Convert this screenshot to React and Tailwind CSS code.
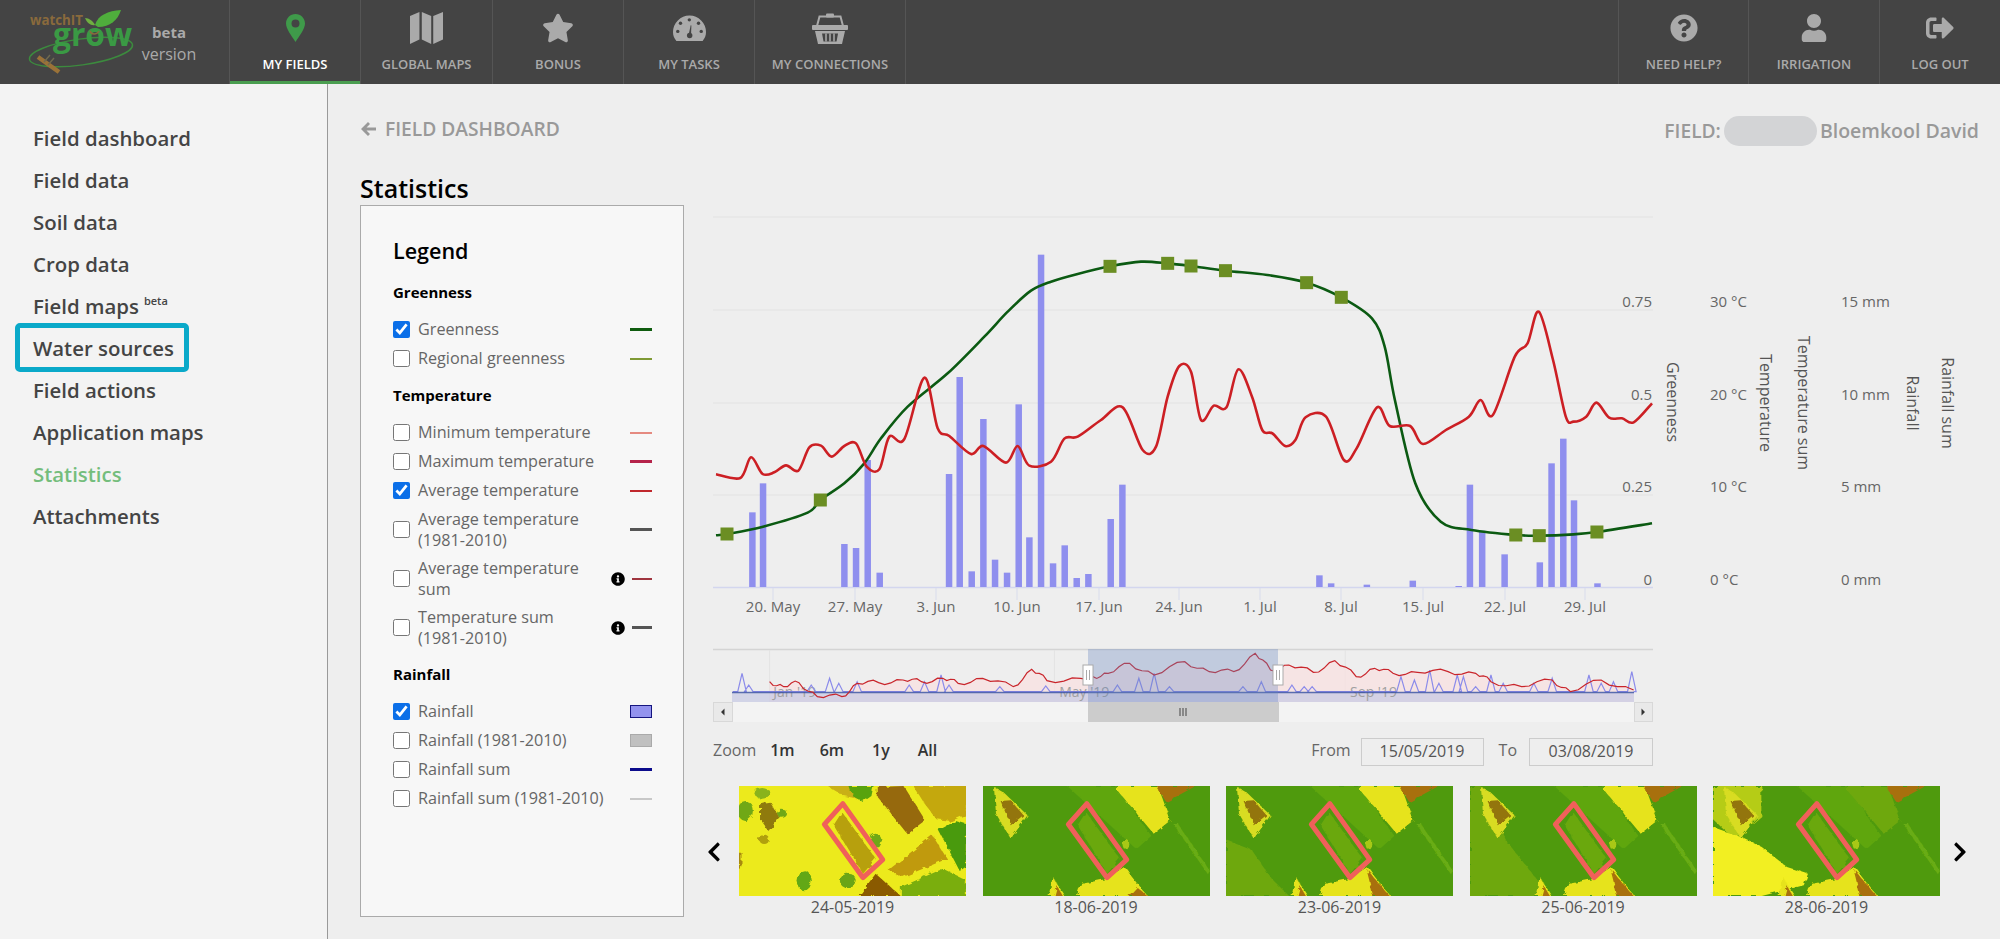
import React from "react";
import {
  FaStar,
  FaQuestionCircle,
  FaUser,
  FaSignOutAlt,
  FaInfoCircle,
  FaChevronLeft,
  FaChevronRight,
} from "react-icons/fa";

const sideItems = [
  "Field dashboard",
  "Field data",
  "Soil data",
  "Crop data",
  "Field maps",
  "Water sources",
  "Field actions",
  "Application maps",
  "Statistics",
  "Attachments",
];

const legend = [
  {
    title: "Greenness",
    rows: [
      { label: "Greenness", checked: true, swatch: "h-[3px] bg-[#0f5c0f]" },
      { label: "Regional greenness", swatch: "h-[2px] bg-[#7f9a35]" },
    ],
  },
  {
    title: "Temperature",
    rows: [
      { label: "Minimum temperature", swatch: "h-[2px] bg-[#e58a80]" },
      { label: "Maximum temperature", swatch: "h-[3px] bg-[#b5234a]" },
      { label: "Average temperature", checked: true, swatch: "h-[2px] bg-[#c0272d]" },
      { label: "Average temperature\n(1981-2010)", swatch: "h-[3px] bg-[#555555]" },
      { label: "Average temperature\nsum", info: true, swatch: "h-[2px] bg-[#a0353f]" },
      { label: "Temperature sum\n(1981-2010)", info: true, swatch: "h-[3px] bg-[#555555]" },
    ],
  },
  {
    title: "Rainfall",
    rows: [
      { label: "Rainfall", checked: true, swatch: "h-[13px] bg-[#9393ee] border border-[#15157f]" },
      { label: "Rainfall (1981-2010)", swatch: "h-[13px] bg-[#c0c0c0] border border-[#aaaaaa]" },
      { label: "Rainfall sum", swatch: "h-[3px] bg-[#0c0c8c]" },
      { label: "Rainfall sum (1981-2010)", swatch: "h-[2px] bg-[#c8c8c8]" },
    ],
  },
];

// chart coordinates were read off the zoomed crops
const z5 = ([x, y]) => [700 + x / 3, 200 + y / 3];
const z6 = ([x, y]) => [1200 + x / 1.96, 200 + y / 3];
const z7 = ([x, y]) => [700 + x / 1.633, 640 + y / 3];

const greenPts = [
  ...[[45,1006],[78,1002],[186,980],[320,938],[358,900],[430,850],[490,790],[540,715],[620,620],[740,520],[850,410],[920,335],[990,272],[1050,245],[1130,222],[1227,199],[1320,185],[1400,190],[1470,198]].map(z5),
  ...[[48,212],[130,225],[207,248],[275,292],[335,355],[360,440],[380,600],[420,850],[470,965],[530,990],[617,1005],[663,1007],[730,1003],[776,996],[884,970]].map(z6),
];

const markers = [
  ...[[78,1002],[358,900],[1227,199],[1400,190],[1470,198]].map(z5),
  ...[[48,212],[207,248],[275,292],[617,1005],[663,1007],[776,996]].map(z6),
];

const redPts = [
  ...[[45,823],[118,834],[150,772],[185,822],[220,817],[255,796],[292,812],[325,742],[360,737],[392,770],[430,738],[465,730],[497,800],[535,808],[565,710],[610,717],[670,533],[710,685],[745,708],[810,762],[847,738],[915,788],[950,738],[985,797],[1050,785],[1090,716],[1130,710],[1200,660],[1265,622],[1325,750],[1365,740],[1400,590],[1435,498],[1470,515],[1500,660]].map(z5),
  ...[[25,617],[50,622],[73,508],[100,590],[120,690],[140,700],[165,738],[185,720],[205,652],[245,650],[280,780],[305,745],[345,622],[370,678],[410,678],[435,732],[480,690],[525,650],[548,600],[572,645],[615,470],[640,430],[662,335],[690,480],[715,650],[730,665],[755,650],[775,608],[800,653],[825,655],[848,667],[884,610]].map(z6),
];

const bars = [
  ...[[154,937],[186,850],[430,1032],[465,1044],[500,780],[536,1118],[744,822],[776,531],[812,1114],[847,657],[882,1079],[918,1118],[953,613],[985,1012],[1020,164],[1056,1090],[1091,1036],[1127,1134],[1162,1122],[1229,957],[1264,854]].map(z5),
  ...[[232,1126],[255,1150],[325,1154],[415,1142],[505,1158],[527,854],[551,992],[595,1063],[664,1087],[687,790],[710,716],[731,901],[777,1150]].map(z6),
];

const ticks = [
  [772, "20. May"], [854, "27. May"], [935, "3. Jun"], [1016, "10. Jun"], [1098, "17. Jun"],
  [1178, "24. Jun"], [1259, "1. Jul"], [1340, "8. Jul"], [1422, "15. Jul"], [1504, "22. Jul"], [1584, "29. Jul"],
];

const gridYs = [217, 310, 403, 495];

const yLabels = [
  [302, "0.75", "30 °C", "15 mm"],
  [395, "0.5", "20 °C", "10 mm"],
  [487, "0.25", "10 °C", "5 mm"],
  [580, "0", "0 °C", "0 mm"],
];

const axisTitles = [
  [1672, 402, "Greenness"],
  [1765, 403, "Temperature"],
  [1803, 403, "Temperature sum"],
  [1912, 403, "Rainfall"],
  [1947, 403, "Rainfall sum"],
];

const navRed = [[112,125],[135,140],[160,128],[190,170],[230,170],[255,130],[290,128],[330,120],[360,125],[395,115],[420,130],[460,115],[510,140],[540,88],[565,122],[620,115],[640,110],[665,100],[700,70],[740,105],[790,65],[830,95],[870,95],[905,40],[930,90],[960,75],[1000,97],[1035,62],[1070,110],[1100,85],[1130,100],[1170,97],[1220,95],[1265,100],[1290,125],[1340,140],[1390,120],[1420,155],[1470,120],[1523,150]];
const navSpikes = [[67,100],[78,135],[180,135],[210,115],[225,130],[255,125],[340,135],[365,125],[392,105],[405,135],[488,140],[563,138],[680,135],[715,115],[740,100],[765,140],[885,140],[915,125],[965,135],[985,140],[998,140],[1143,110],[1165,120],[1190,90],[1205,130],[1235,105],[1245,110],[1265,140],[1290,105],[1310,130],[1360,130],[1390,115],[1450,105],[1470,130],[1490,125],[1520,95]];

// catmull-rom through the points, flattened to cubic beziers
function smooth(pts, t = 0.16) {
  let d = `M${pts[0][0]} ${pts[0][1]}`;
  for (let i = 0; i < pts.length - 1; i++) {
    const p0 = pts[i - 1] || pts[i];
    const p1 = pts[i];
    const p2 = pts[i + 1];
    const p3 = pts[i + 2] || p2;
    d += `C${p1[0] + (p2[0] - p0[0]) * t} ${p1[1] + (p2[1] - p0[1]) * t} ${p2[0] - (p3[0] - p1[0]) * t} ${p2[1] - (p3[1] - p1[1]) * t} ${p2[0]} ${p2[1]}`;
  }
  return d;
}

// adds the small day-to-day jitter of the navigator series
function wiggle(pts, amp) {
  const out = [];
  pts.forEach((p, i) => {
    out.push(p);
    const n = pts[i + 1];
    if (n) out.push([(p[0] + n[0]) / 2, (p[1] + n[1]) / 2 + (i % 2 ? -amp : amp)]);
  });
  return out;
}

function spikeLine() {
  let d = `M${z7([52, 155]).join(" ")}`;
  navSpikes.forEach(([x, y]) => {
    const a = z7([x - 7, 155]);
    const b = z7([x, y]);
    const c = z7([x + 7, 155]);
    d += `L${a.join(" ")}L${b.join(" ")}L${c.join(" ")}`;
  });
  return d + `L${z7([1523, 155]).join(" ")}`;
}

function StatsChart() {
  const navRedPts = wiggle(wiggle(navRed.map(z7), 1.6), 1.8);
  const navRedLine = "M" + navRedPts.map((p) => p.join(" ")).join("L");
  const areaD = navRedLine + `L${navRedPts[navRedPts.length - 1][0]} 702L${navRedPts[0][0]} 702Z`;
  return (
    <svg width="1300" height="520" viewBox="700 205 1300 520" className="block" fontFamily="Open Sans, sans-serif">
      {gridYs.map((y) => (
        <line key={y} x1="712" x2="1652" y1={y} y2={y} stroke="#e6e6e6" strokeWidth="1.5" />
      ))}
      <line x1="712" x2="1652" y1="587.5" y2="587.5" stroke="#d3d6ee" strokeWidth="1.5" />
      {ticks.map(([x, label]) => (
        <g key={label}>
          <line x1={x} x2={x} y1="588" y2="600" stroke="#d8dcec" />
          <text x={x} y="612" textAnchor="middle" fontSize="15" fill="#666666">
            {label}
          </text>
        </g>
      ))}
      {bars.map(([x, y], i) => (
        <rect key={i} x={x - 3.2} y={y} width="6.5" height={587 - y} fill="#8f8fee" />
      ))}
      <path d={smooth(greenPts)} fill="none" stroke="#0b5a12" strokeWidth="2.6" />
      <path d={smooth(redPts)} fill="none" stroke="#cc1f24" strokeWidth="2.6" />
      {markers.map(([x, y], i) => (
        <rect key={i} x={x - 6.5} y={y - 6.5} width="13" height="13" fill="#6b8e23" />
      ))}
      {yLabels.map(([y, a, b, c]) => (
        <g key={a} fontSize="15" fill="#666666">
          <text x="1651" y={y + 5} textAnchor="end">{a}</text>
          <text x="1709" y={y + 5}>{b}</text>
          <text x="1840" y={y + 5}>{c}</text>
        </g>
      ))}
      {axisTitles.map(([x, y, label]) => (
        <text
          key={label}
          x={x}
          y={y}
          textAnchor="middle"
          dominantBaseline="central"
          fontSize="16"
          fill="#555555"
          transform={`rotate(90 ${x} ${y})`}
        >
          {label}
        </text>
      ))}

      {/* navigator */}
      <line x1="712" x2="1652" y1="649.5" y2="649.5" stroke="#d4d4d4" strokeWidth="1.5" />
      {[112, 577, 1052].map((x) => (
        <line key={x} x1={z7([x, 0])[0]} x2={z7([x, 0])[0]} y1="650" y2="702" stroke="#e3e3e3" />
      ))}
      <path d={areaD} fill="#f9dfdf" fillOpacity="0.7" />
      <rect x="731" y="692" width="902" height="10" fill="#c8cbe4" fillOpacity="0.75" />
      {[[118, "Jan '19"], [585, "May '19"], [1060, "Sep '19"]].map(([x, label]) => (
        <text key={label} x={z7([x, 0])[0]} y="697" fontSize="14" fill="#a0a0a0">
          {label}
        </text>
      ))}
      <path d={spikeLine()} fill="none" stroke="#8b8bea" strokeWidth="1.2" />
      <line x1="731" x2="1633" y1="692.5" y2="692.5" stroke="#2f4a9c" strokeWidth="1.3" strokeOpacity="0.75" />
      <path d={navRedLine} fill="none" stroke="#c9252b" strokeWidth="1.2" />
      <rect x="1087" y="649" width="190" height="53" fill="#6685c0" fillOpacity="0.33" />
      {[1087, 1277].map((x) => (
        <g key={x}>
          <rect x={x - 5} y="665" width="10" height="20" fill="#ffffff" stroke="#aaaaaa" />
          <line x1={x - 1.5} x2={x - 1.5} y1="670" y2="680" stroke="#aaaaaa" />
          <line x1={x + 1.5} x2={x + 1.5} y1="670" y2="680" stroke="#aaaaaa" />
        </g>
      ))}

      {/* scrollbar */}
      <rect x="712" y="702" width="940" height="20" fill="#f3f3f3" />
      <rect x="1087" y="702" width="191" height="20" fill="#cccccc" />
      <path d="M1179 708v8M1182 708v8M1185 708v8" stroke="#444444" />
      <rect x="712.5" y="702.5" width="19" height="19" fill="#e9e9e9" stroke="#d8d8d8" />
      <rect x="1633.5" y="702.5" width="18" height="19" fill="#e9e9e9" stroke="#d8d8d8" />
      <path d="M723.5 708.5v7l-3.5-3.5zM1640.5 708.5v7l3.5-3.5z" fill="#333333" />
    </svg>
  );
}

// thumbnail layers, in a 540x330 box measured from the crops
const dryLayers = [
  { fill: "#70a815", cx: 15, cy: 75, rx: 18, ry: 30 },
  { fill: "#8ab31a", cx: 55, cy: 22, rx: 18, ry: 16 },
  { fill: "#70a815", cx: 100, cy: 80, rx: 12, ry: 12 },
  { fill: "#8f7a10", points: "50,55 75,50 95,95 70,135 50,100" },
  { fill: "#b0a010", cx: 60, cy: 160, rx: 12, ry: 14 },
  { fill: "#c9b015", points: "210,0 285,0 290,40 250,30" },
  { fill: "#58a30e", points: "262,0 320,0 315,30 295,48 270,30" },
  { fill: "#96690a", points: "330,3 392,0 443,103 400,143 330,33" },
  { fill: "#c4a80c", points: "415,0 542,0 542,85 505,105 470,100 440,50" },
  { fill: "#4a9a08", points: "475,133 515,105 542,115 542,240 525,255" },
  { fill: "#c09a08", points: "355,253 460,148 495,218 390,273" },
  { fill: "#7aae10", points: "385,303 485,248 542,283 542,330 385,330" },
  { fill: "#8a5a00", points: "325,263 385,330 285,330" },
  { fill: "#a88a08", points: "0,200 6,200 6,240 0,250" },
  { fill: "#62a812", cx: 155, cy: 283, rx: 18, ry: 30 },
  { fill: "#6aa514", cx: 260, cy: 285, rx: 20, ry: 22 },
  { fill: "#70a815", cx: 325, cy: 165, rx: 14, ry: 22 },
  { fill: "#b7a00a", points: "225,118 245,78 325,218 295,263" },
];

function greenLayers({ extra = [], field = "#e6e31c", stripe = "334,248 389,330 350,330" } = {}) {
  return [
    { fill: "#5ea60e", points: "200,0 318,0 400,150 365,190" },
    ...extra,
    { fill: field, points: "321,0 416,0 446,103 406,143 321,15" },
    { fill: "#a87008", points: "411,0 506,0 436,48" },
    { fill: "#d8dc20", points: "26,3 50,20 106,88 66,158 31,83" },
    { fill: "#93740c", points: "42,45 66,43 96,88 66,118" },
    { fill: "#e6e31c", points: "336,243 391,330 226,330 236,293 290,280" },
    { fill: "#a87008", points: stripe },
    { fill: "#e6e31c", points: "166,273 196,330 156,330" },
    { fill: "#a87008", points: "176,300 190,330 170,330" },
    { fill: "#68ac12", points: "450,110 460,106 540,255 535,265" },
    { fill: "#a8c818", cx: 340, cy: 175, rx: 8, ry: 16 },
    { fill: "#6aa810", points: "225,118 245,78 325,218 295,263" },
  ];
}

const thumbs = [
  { date: "24-05-2019", base: "#ecea1e", layers: dryLayers },
  { date: "18-06-2019", base: "#4f9a08", layers: greenLayers({ stripe: "366,303 391,330 346,330" }) },
  {
    date: "23-06-2019",
    base: "#4f9a08",
    layers: greenLayers({ extra: [{ fill: "#6ea810", points: "0,160 60,190 110,280 150,330 0,330" }] }),
  },
  {
    date: "25-06-2019",
    base: "#4f9a08",
    layers: greenLayers({ extra: [{ fill: "#6ea810", points: "0,0 25,0 90,170 190,330 0,330" }] }),
  },
  {
    date: "28-06-2019",
    base: "#4f9a08",
    layers: greenLayers({
      field: "#6ea810",
      extra: [
        { fill: "#b5cc18", points: "0,0 115,0 115,90 50,160 0,100" },
        { fill: "#f2ef20", points: "0,123 66,153 116,183 176,243 226,263 216,298 116,330 0,330" },
      ],
    }),
  },
];

function Thumb({ thumb }) {
  return (
    <div className="w-[227px]">
      <svg width="227" height="110" viewBox="0 0 540 330" preserveAspectRatio="none" className="block">
        <filter id="soft" x="-5%" y="-5%" width="110%" height="110%">
          <feTurbulence type="fractalNoise" baseFrequency="0.06" numOctaves="2" seed="4" result="noise" />
          <feDisplacementMap in="SourceGraphic" in2="noise" scale="16" result="rough" />
          <feGaussianBlur in="rough" stdDeviation="1.6" />
        </filter>
        <g filter="url(#soft)">
          <rect x="-30" y="-30" width="600" height="390" fill={thumb.base} />
          {thumb.layers.map((l, i) =>
            l.points ? (
              <polygon key={i} fill={l.fill} points={l.points} />
            ) : (
              <ellipse key={i} fill={l.fill} cx={l.cx} cy={l.cy} rx={l.rx} ry={l.ry} />
            ),
          )}
        </g>
        <polygon
          points="247,53 342,221 295,275 203,115"
          fill="none"
          stroke="#f0605a"
          strokeWidth="5"
          strokeLinejoin="round"
          vectorEffect="non-scaling-stroke"
        />
      </svg>
      <div className="h-[22px] text-center text-[16px] leading-[22px] text-[#555]">{thumb.date}</div>
    </div>
  );
}

function PinIcon() {
  return (
    <svg width="19" height="28" viewBox="0 0 19 28" fill="#3f9a4a">
      <path
        fillRule="evenodd"
        d="M9.5 0C4.2 0 0 4.2 0 9.5 0 15 5.5 21.5 9.5 28 13.5 21.5 19 15 19 9.5 19 4.2 14.8 0 9.5 0ZM9.5 5.5a4 4 0 1 1 0 8 4 4 0 0 1 0-8Z"
      />
    </svg>
  );
}

function MapIcon() {
  return (
    <svg width="33" height="32" viewBox="0 0 98 95" fill="#aaaaaa">
      <path d="M0 12 28 0V82L0 95Z" />
      <path d="M35 0 63 12V95L35 82Z" />
      <path d="M69 12 98 0V82L69 95Z" />
    </svg>
  );
}

function GaugeIcon() {
  return (
    <svg width="33" height="26" viewBox="0 0 97 76">
      <path d="M10 76C3 68 0 60 0 50A48.5 48.5 0 0 1 97 50C97 60 94 68 87 76Z" fill="#aaaaaa" />
      <g fill="#444444">
        <circle cx="48" cy="14" r="5" />
        <circle cx="22" cy="24" r="5" />
        <circle cx="75" cy="24" r="5" />
        <circle cx="14" cy="48" r="5" />
        <circle cx="83" cy="48" r="5" />
        <circle cx="49" cy="60" r="8" />
      </g>
      <path d="M46 58 52 30 54 31 53 60Z" fill="#444444" />
    </svg>
  );
}

function BasketIcon() {
  return (
    <svg width="36" height="31" viewBox="0 0 36 31">
      <path d="M5 13 7.5 3.5H28.5L31 13" fill="none" stroke="#aaaaaa" strokeWidth="2" />
      <rect x="14" y="0.5" width="8" height="4" rx="1" fill="#aaaaaa" />
      <rect x="0" y="12" width="36" height="5" rx="1" fill="#aaaaaa" />
      <path d="M3 18H33L30 31H6Z" fill="#aaaaaa" />
      <path d="M10 20.5H26L24.5 28.5H11.5Z" fill="#444444" />
      <path d="M14 20.5V28.5M18 20.5V28.5M22 20.5V28.5" stroke="#aaaaaa" strokeWidth="1.5" />
    </svg>
  );
}

function BackArrow() {
  return (
    <svg width="16" height="16" viewBox="0 0 16 16" fill="#999999">
      <path d="M8 1 1 8 8 15 10 13 6.5 9.5H16V6.5H6.5L10 3Z" />
    </svg>
  );
}

function Logo() {
  return (
    <svg width="120" height="84" viewBox="20 0 120 84" className="block" fontFamily="Open Sans, sans-serif">
      <ellipse cx="81" cy="52" rx="52" ry="13" fill="none" stroke="#3c8a3e" strokeWidth="1.5" transform="rotate(-8 81 52)" />
      <text x="30" y="25" fontSize="15" fontWeight="700" fill="#8a6a3c" textLength="53" lengthAdjust="spacingAndGlyphs">
        watchIT
      </text>
      <text x="53" y="46" fontSize="32" fontWeight="700" fill="#3a9a44" textLength="79" lengthAdjust="spacingAndGlyphs">
        grow
      </text>
      <path d="M95 25C98 15 108 11 121 10 118 20 110 27 98 27Z" fill="#4fae3c" />
      <path d="M85 18C89 18 93 21 95 25 91 26 87 23 85 18Z" fill="#6fb040" />
      <path d="M90 31C91 35 97 35 99 31" fill="none" stroke="#8a6a3c" strokeWidth="1.5" />
      <path d="M38 57 59 72" stroke="#9a7238" strokeWidth="4.5" />
      <path d="M50 55 44 62M54 58 48 65" stroke="#6f6a50" strokeWidth="1.5" />
    </svg>
  );
}

function NavItem({ icon, label, active, right }) {
  return (
    <div
      className={`relative flex h-full flex-col items-center ${right ? "border-l border-[#555]" : "border-r border-[#555]"}`}
    >
      <div className="flex h-[56px] items-center justify-center text-[#aaaaaa]">{icon}</div>
      <div className={`text-[13px] leading-[16px] font-semibold uppercase ${active ? "text-white" : "text-[#aaaaaa]"}`}>
        {label}
      </div>
      {active && <div className="absolute right-0 bottom-0 left-0 h-[3px] bg-[#4a9e50]" />}
    </div>
  );
}

function LegendRow({ row }) {
  const isDouble = row.label.includes("\n");
  return (
    <div className={`flex items-center ${isDouble ? "h-[49px]" : "h-[29px]"}`}>
      <input type="checkbox" defaultChecked={row.checked} className="m-0 h-[17px] w-[17px] shrink-0 accent-[#0b6fe8]" />
      <span className="ml-[8px] flex-1 text-[16.2px] leading-[21px] whitespace-pre-line text-[#666]">{row.label}</span>
      {row.info && <FaInfoCircle className="mr-[7px] text-[14px] text-black" />}
      <span className={`${row.info ? "w-[20px]" : "w-[22px]"} ${row.swatch}`} />
    </div>
  );
}

export default function App() {
  return (
    <div className="flex h-screen w-full flex-col overflow-hidden bg-[#eeeeee] [font-family:'Open_Sans',sans-serif]">
      <header className="flex h-[84px] shrink-0 bg-[#444444]">
        <div className="flex w-[230px] border-r border-[#555] pl-[20px]">
          <Logo />
          <div className="flex w-[58px] flex-col items-center pt-[21px] text-[#aaaaaa]">
            <span className="text-[15px] leading-[22px] font-bold">beta</span>
            <span className="text-[16px] leading-[22px]">version</span>
          </div>
        </div>
        <div className="w-[131px]">
          <NavItem icon={<PinIcon />} label="My fields" active />
        </div>
        <div className="w-[132px]">
          <NavItem icon={<MapIcon />} label="Global maps" />
        </div>
        <div className="w-[131px]">
          <NavItem icon={<FaStar className="text-[32px]" />} label="Bonus" />
        </div>
        <div className="w-[131px]">
          <NavItem icon={<GaugeIcon />} label="My tasks" />
        </div>
        <div className="w-[151px]">
          <NavItem icon={<BasketIcon />} label="My connections" />
        </div>
        <div className="flex-1" />
        <div className="w-[130px]">
          <NavItem icon={<FaQuestionCircle className="text-[28px]" />} label="Need help?" right />
        </div>
        <div className="w-[131px]">
          <NavItem icon={<FaUser className="text-[28px]" />} label="Irrigation" right />
        </div>
        <div className="w-[121px]">
          <NavItem icon={<FaSignOutAlt className="text-[28px]" />} label="Log out" right />
        </div>
      </header>

      <div className="flex flex-1">
        <aside className="w-[328px] shrink-0 border-r border-[#999999] bg-[#f3f3f3] pt-[33px] pl-[33px]">
          {sideItems.map((item) => (
            <div
              key={item}
              className={`relative flex h-[42px] items-center text-[20.4px] font-semibold ${item === "Statistics" ? "text-[#74bd7c]" : "text-[#444444]"}`}
            >
              {item}
              {item === "Field maps" && <sup className="ml-[5px] text-[11px] font-semibold">beta</sup>}
              {item === "Water sources" && (
                <span className="absolute top-[-4px] left-[-18px] h-[49px] w-[174px] rounded-[5px] border-[5px] border-[#0aa9c9]" />
              )}
            </div>
          ))}
        </aside>

        <main className="flex-1 pl-[32px]">
          <div className="flex h-[90px] items-start justify-between pt-[32px] pr-[22px] text-[19.2px] leading-[26px] font-semibold text-[#999999]">
            <div className="flex items-center">
              <span className="mr-[9px]">
                <BackArrow />
              </span>
              FIELD DASHBOARD
            </div>
            <div className="flex items-center">
              FIELD:
              <span className="mr-[3px] ml-[3px] h-[30px] w-[93px] rounded-full bg-[#d3d4d6]" />
              <span className="text-[19.5px]">Bloemkool David</span>
            </div>
          </div>
          <h2 className="mt-[-2px] h-[33px] text-[25px] leading-[32px] font-semibold text-black">Statistics</h2>

          <div className="flex">
            <div className="h-[712px] w-[324px] shrink-0 border border-[#aaaaaa] bg-[#f7f7f7] pt-[30px] pr-[31px] pl-[32px]">
              <div className="mb-[15px] text-[21.5px] leading-[30px] font-semibold text-black">Legend</div>
              {legend.map((section, i) => (
                <div key={section.title} className={i > 0 ? "mt-[11px]" : ""}>
                  <div className="mb-[12px] h-[22px] text-[15px] leading-[22px] font-bold text-black">{section.title}</div>
                  {section.rows.map((row) => (
                    <LegendRow key={row.label} row={row} />
                  ))}
                </div>
              ))}
            </div>

            <div className="ml-[17px] flex-1">
              <StatsChart />
              <div className="mt-[13px] ml-[12px] flex h-[28px] w-[940px] items-center text-[16px] text-[#666]">
                <span className="pb-[5px]">Zoom</span>
                <div className="ml-[14px] flex gap-[28px] pb-[5px] font-semibold text-[#333]">
                  <span className="mr-[-3px]">1m</span>
                  <span>6m</span>
                  <span>1y</span>
                  <span>All</span>
                </div>
                <div className="ml-auto flex items-center">
                  <span className="pb-[5px]">From</span>
                  <span className="ml-[10px] flex h-[28px] w-[123px] items-center justify-center border border-[#cccccc] pb-[3px] text-[#555]">
                    15/05/2019
                  </span>
                  <span className="mr-[12px] ml-[15px] pb-[5px]">To</span>
                  <span className="flex h-[28px] w-[124px] items-center justify-center border border-[#cccccc] pb-[3px] text-[#555]">
                    03/08/2019
                  </span>
                </div>
              </div>
              <div className="mt-[20px] flex items-center">
                <div className="flex w-[38px] justify-start pl-[2px] text-[22px] text-black">
                  <FaChevronLeft />
                </div>
                <div className="flex gap-[16.5px]">
                  {thumbs.map((t) => (
                    <Thumb key={t.date} thumb={t} />
                  ))}
                </div>
                <div className="ml-[9px] text-[22px] text-black">
                  <FaChevronRight />
                </div>
              </div>
            </div>
          </div>
        </main>
      </div>
    </div>
  );
}
